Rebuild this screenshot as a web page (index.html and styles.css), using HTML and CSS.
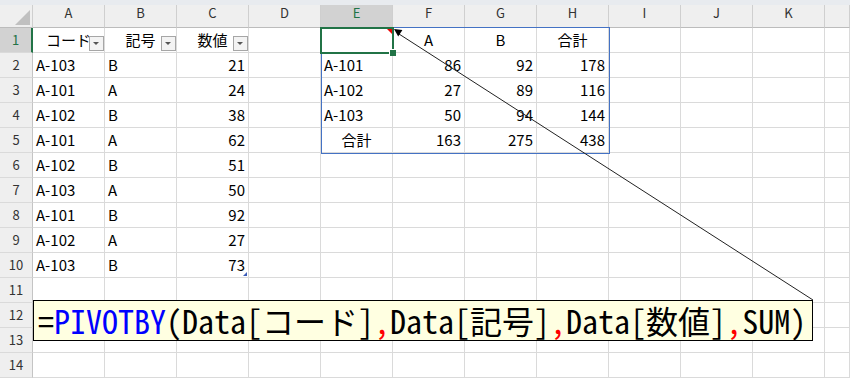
FILE: index.html
```html
<!DOCTYPE html>
<html lang="ja">
<head>
  <meta charset="UTF-8" />
  <title>PIVOTBY</title>
  <link rel="stylesheet" href="styles.css">
</head>
<body>
  <div class="sheet">
    <div class="strip"></div>

    <div class="row head">
      <div class="corner"></div>
      <div class="c">A</div><div class="c">B</div><div class="c">C</div><div class="c">D</div>
      <div class="c sel">E</div><div class="c">F</div><div class="c">G</div><div class="c">H</div>
      <div class="c">I</div><div class="c">J</div><div class="c">K</div><div class="c"></div>
    </div>

    <div class="row">
      <div class="rh sel">1</div>
      <div class="c th">コード<span class="dd"></span></div>
      <div class="c th">記号<span class="dd"></span></div>
      <div class="c th">数値<span class="dd"></span></div>
      <div class="c"></div>
      <div class="c"></div><div class="c m">A</div><div class="c m">B</div><div class="c m">合計</div>
      <div class="c"></div><div class="c"></div><div class="c"></div><div class="c"></div>
    </div>

    <div class="row">
      <div class="rh">2</div>
      <div class="c">A-103</div><div class="c">B</div><div class="c n">21</div><div class="c"></div>
      <div class="c">A-101</div><div class="c n">86</div><div class="c n">92</div><div class="c n">178</div>
      <div class="c"></div><div class="c"></div><div class="c"></div><div class="c"></div>
    </div>

    <div class="row">
      <div class="rh">3</div>
      <div class="c">A-101</div><div class="c">A</div><div class="c n">24</div><div class="c"></div>
      <div class="c">A-102</div><div class="c n">27</div><div class="c n">89</div><div class="c n">116</div>
      <div class="c"></div><div class="c"></div><div class="c"></div><div class="c"></div>
    </div>

    <div class="row">
      <div class="rh">4</div>
      <div class="c">A-102</div><div class="c">B</div><div class="c n">38</div><div class="c"></div>
      <div class="c">A-103</div><div class="c n">50</div><div class="c n">94</div><div class="c n">144</div>
      <div class="c"></div><div class="c"></div><div class="c"></div><div class="c"></div>
    </div>

    <div class="row">
      <div class="rh">5</div>
      <div class="c">A-101</div><div class="c">A</div><div class="c n">62</div><div class="c"></div>
      <div class="c m">合計</div><div class="c n">163</div><div class="c n">275</div><div class="c n">438</div>
      <div class="c"></div><div class="c"></div><div class="c"></div><div class="c"></div>
    </div>

    <div class="row">
      <div class="rh">6</div>
      <div class="c">A-102</div><div class="c">B</div><div class="c n">51</div><div class="c"></div>
      <div class="c"></div><div class="c"></div><div class="c"></div><div class="c"></div>
      <div class="c"></div><div class="c"></div><div class="c"></div><div class="c"></div>
    </div>

    <div class="row">
      <div class="rh">7</div>
      <div class="c">A-103</div><div class="c">A</div><div class="c n">50</div><div class="c"></div>
      <div class="c"></div><div class="c"></div><div class="c"></div><div class="c"></div>
      <div class="c"></div><div class="c"></div><div class="c"></div><div class="c"></div>
    </div>

    <div class="row">
      <div class="rh">8</div>
      <div class="c">A-101</div><div class="c">B</div><div class="c n">92</div><div class="c"></div>
      <div class="c"></div><div class="c"></div><div class="c"></div><div class="c"></div>
      <div class="c"></div><div class="c"></div><div class="c"></div><div class="c"></div>
    </div>

    <div class="row">
      <div class="rh">9</div>
      <div class="c">A-102</div><div class="c">A</div><div class="c n">27</div><div class="c"></div>
      <div class="c"></div><div class="c"></div><div class="c"></div><div class="c"></div>
      <div class="c"></div><div class="c"></div><div class="c"></div><div class="c"></div>
    </div>

    <div class="row">
      <div class="rh">10</div>
      <div class="c">A-103</div><div class="c">B</div><div class="c n end">73</div><div class="c"></div>
      <div class="c"></div><div class="c"></div><div class="c"></div><div class="c"></div>
      <div class="c"></div><div class="c"></div><div class="c"></div><div class="c"></div>
    </div>

    <div class="row">
      <div class="rh">11</div>
      <div class="c"></div><div class="c"></div><div class="c"></div><div class="c"></div>
      <div class="c"></div><div class="c"></div><div class="c"></div><div class="c"></div>
      <div class="c"></div><div class="c"></div><div class="c"></div><div class="c"></div>
    </div>

    <div class="row">
      <div class="rh">12</div>
      <div class="c"></div><div class="c"></div><div class="c"></div><div class="c"></div>
      <div class="c"></div><div class="c"></div><div class="c"></div><div class="c"></div>
      <div class="c"></div><div class="c"></div><div class="c"></div><div class="c"></div>
    </div>

    <div class="row">
      <div class="rh">13</div>
      <div class="c"></div><div class="c"></div><div class="c"></div><div class="c"></div>
      <div class="c"></div><div class="c"></div><div class="c"></div><div class="c"></div>
      <div class="c"></div><div class="c"></div><div class="c"></div><div class="c"></div>
    </div>

    <div class="row">
      <div class="rh">14</div>
      <div class="c"></div><div class="c"></div><div class="c"></div><div class="c"></div>
      <div class="c"></div><div class="c"></div><div class="c"></div><div class="c"></div>
      <div class="c"></div><div class="c"></div><div class="c"></div><div class="c"></div>
    </div>

    <!-- overlays -->
    <div class="pivot-range"></div>
    <div class="active-cell"><span class="handle"></span></div>
    <div class="note"></div>

    <svg class="pointer" width="850" height="380">
      <line x1="399" y1="34" x2="813" y2="300" stroke="#222" stroke-width="1" />
      <polygon points="394,29 398.2,36.4 402.4,29.9" fill="#000" />
    </svg>

    <div class="formula">=<span class="fn">PIVOTBY</span>(Data[コード]<span class="sep">,</span>Data[記号]<span class="sep">,</span>Data[数値]<span class="sep">,</span>SUM)</div>
  </div>
</body>
</html>
```

FILE: styles.css
```css
body {
  margin: 0;
  background: #fff;
}
.sheet {
  position: relative;
  width: 850px;
  height: 380px;
  overflow: hidden;
  font-family: "Noto Sans CJK JP", "Noto Sans", sans-serif;
  color: #000;
}
.strip {
  height: 5px;
  background: #e8ebef;
}
.row {
  display: grid;
  grid-template-columns: 33px repeat(11, 72px) 1fr;
  height: 25px;
}
.c {
  box-sizing: border-box;
  border-right: 1px solid #dadada;
  border-bottom: 1px solid #dadada;
  padding: 0 3px;
  font-size: 15px;
  line-height: 24px;
  white-space: nowrap;
}
.n {
  text-align: right;
}
.m {
  text-align: center;
}
.rh {
  box-sizing: border-box;
  background: #efefef;
  border-right: 1px solid #c4c4c4;
  border-bottom: 1px solid #dadada;
  text-align: center;
  font-size: 13px;
  line-height: 24px;
  color: #333;
}
.rh.sel {
  background: #d2d2d2;
  color: #217346;
  border-right: 2px solid #217346;
}

/* column headers */
.row.head {
  height: 23px;
}
.head .c {
  background: #efefef;
  border-right-color: #cfcfcf;
  border-bottom: 1px solid #bcbcbc;
  text-align: center;
  font-size: 13px;
  line-height: 15px;
  color: #333;
}
.head .c.sel {
  background: #d2d2d2;
  color: #217346;
}
.corner {
  position: relative;
  box-sizing: border-box;
  background: #efefef;
  border-right: 1px solid #cfcfcf;
  border-bottom: 1px solid #bcbcbc;
}
.corner::after {
  content: "";
  position: absolute;
  right: 2px;
  bottom: 2px;
  border-left: 15px solid transparent;
  border-bottom: 15px solid #c0c0c0;
}

/* table header with filter buttons */
.th {
  position: relative;
  text-align: center;
  overflow: hidden;
}
.dd {
  position: absolute;
  right: 0;
  top: 8px;
  width: 15px;
  height: 15px;
  box-sizing: border-box;
  border: 1px solid #a6a6a6;
  background: #f3f3f3;
}
.dd::after {
  content: "";
  position: absolute;
  left: 3px;
  top: 5px;
  border-left: 3.5px solid transparent;
  border-right: 3.5px solid transparent;
  border-top: 3.5px solid #555;
}
.end {
  position: relative;
}
.end::after {
  content: "";
  position: absolute;
  right: 1px;
  bottom: 1px;
  border-left: 4px solid transparent;
  border-bottom: 4px solid #3b5cb8;
}

/* overlays */
.pivot-range {
  position: absolute;
  left: 321px;
  top: 27px;
  width: 289px;
  height: 127px;
  box-sizing: border-box;
  border: 1px solid #4472c4;
}
.active-cell {
  position: absolute;
  left: 320px;
  top: 27px;
  width: 74px;
  height: 27px;
  box-sizing: border-box;
  border: 2px solid #217346;
}
.handle {
  position: absolute;
  right: -4px;
  bottom: -4px;
  width: 6px;
  height: 6px;
  background: #217346;
  border: 1px solid #fff;
  border-width: 1px 0 0 1px;
}
.note {
  position: absolute;
  left: 387px;
  top: 29px;
  border-left: 5px solid transparent;
  border-top: 5px solid #e00;
}
.pointer {
  position: absolute;
  left: 0;
  top: 0;
  pointer-events: none;
}
.formula {
  position: absolute;
  left: 33px;
  top: 300px;
  width: 780px;
  height: 41px;
  box-sizing: border-box;
  border: 1px solid #000;
  background: #ffffe1;
  padding-left: 4px;
  font-family: "Noto Sans Mono CJK JP", "Noto Sans CJK JP", monospace;
  font-size: 32px;
  line-height: 39px;
  white-space: nowrap;
  color: #000;
}
.fn {
  color: #0000ff;
}
.sep {
  color: #ff0000;
}
```
